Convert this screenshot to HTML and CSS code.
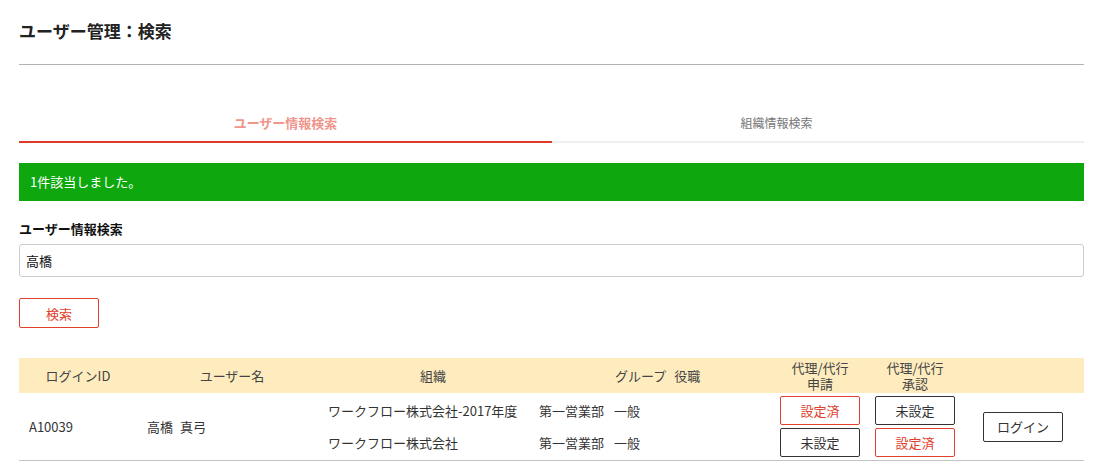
FILE: index.html
```html
<!DOCTYPE html>
<html lang="ja">
<head>
  <meta charset="utf-8">
  <meta name="viewport" content="width=device-width,initial-scale=1">

  <title>ユーザー管理：検索</title>

  <link rel="stylesheet" href="styles.css">
</head>
<body>
  <div class="page">
    <h1 class="page-title">ユーザー管理：検索</h1>

    <div class="tabs">
      <a class="tab active">ユーザー情報検索</a>
      <a class="tab">組織情報検索</a>
    </div>

    <div class="notice">1件該当しました。</div>

    <form class="search" autocomplete="off">
      <label>
        <span class="search-label">ユーザー情報検索</span>
        <input class="search-input" name="keyword" type="text" value="高橋">
      </label>
      <button class="btn btn-red search-btn" type="button">検索</button>
    </form>

    <div class="result">
      <div class="result-head">
        <div class="cell">ログインID</div>
        <div class="cell">ユーザー名</div>
        <div class="cell">組織</div>
        <div class="cell cell-group"><span>グループ</span><span>役職</span></div>
        <div class="cell two-lines"><div>代理/代行</div><div>申請</div></div>
        <div class="cell two-lines"><div>代理/代行</div><div>承認</div></div>
        <div class="cell"></div>
      </div>

      <div class="result-row">
        <div class="cell cell-text">A10039</div>
        <div class="cell cell-text cell-name">高橋 真弓</div>
        <div class="cell cell-stack cell-org">
          <div class="line">ワークフロー株式会社-2017年度</div>
          <div class="line">ワークフロー株式会社</div>
        </div>
        <div class="cell cell-stack">
          <div class="line"><span>第一営業部</span><span>一般</span></div>
          <div class="line"><span>第一営業部</span><span>一般</span></div>
        </div>
        <div class="cell cell-stack cell-buttons">
          <button class="btn btn-red" type="button">設定済</button>
          <button class="btn" type="button">未設定</button>
        </div>
        <div class="cell cell-stack cell-buttons">
          <button class="btn" type="button">未設定</button>
          <button class="btn btn-red" type="button">設定済</button>
        </div>
        <div class="cell cell-login">
          <button class="btn" type="button">ログイン</button>
        </div>
      </div>
    </div>
  </div>
</body>
</html>
```

FILE: styles.css
```css
*, :after, :before {
  box-sizing: border-box;
}

html, body {
  margin: 0;
  padding: 0;
}

body {
  background-color: #fff;
  color: #333;
  font-family: "Noto Sans CJK JP", "Noto Sans", sans-serif;
  font-size: 13px;
  line-height: 18px;
}

.page {
  width: 1065px;
  margin-left: 19px;
  padding-top: 19px;
}

.page-title {
  margin: 0;
  padding-bottom: 21px;
  border-bottom: 1px solid #b3b3b3;
  font-size: 17px;
  font-weight: bold;
  line-height: 24px;
  color: #222;
}

/* tabs */

.tabs {
  display: flex;
  margin-top: 49px;
  border-bottom: 2px solid #efefef;
}

.tab {
  display: block;
  flex: 0 0 449px;
  padding-bottom: 9px;
  margin-bottom: -2px;
  border-bottom: 2px solid transparent;
  text-align: center;
  font-size: 12px;
  color: #777;
}

.tab.active {
  flex-basis: 533px;
  border-bottom-color: #dd3b25;
  font-size: 13px;
  font-weight: bold;
  color: #ef958b;
}

/* notice */

.notice {
  margin-top: 20px;
  height: 38px;
  padding: 10px 11px;
  background-color: #0ea70e;
  color: #fff;
}

/* search form */

.search {
  margin-top: 19px;
}

.search label {
  display: block;
}

.search-label {
  display: block;
  font-weight: bold;
  color: #111;
  margin-bottom: 6px;
}

.search-input {
  display: block;
  width: 100%;
  height: 33px;
  padding: 0 6px;
  border: 1px solid #ccc;
  border-radius: 3px;
  font-family: inherit;
  font-size: 13px;
  color: #111;
}

.btn {
  display: block;
  width: 80px;
  height: 29px;
  padding: 0;
  border: 1px solid #333;
  border-radius: 2px;
  background-color: #fff;
  font-family: inherit;
  font-size: 13px;
  color: #333;
}

.btn-red {
  border-color: #e0402c;
  color: #e0402c;
}

.search-btn {
  height: 30px;
  margin-top: 21px;
}

/* result table */

.result {
  margin-top: 30px;
  border-bottom: 1px solid #c4c4c4;
}

.result-head, .result-row {
  display: grid;
  grid-template-columns: 118px 190px 212px 231px 100px 90px 124px;
}

.result-head {
  height: 35px;
  background-color: #feecbf;
  align-items: center;
  text-align: center;
  color: #444;
}

.result-head .two-lines {
  display: flex;
  flex-direction: column;
  gap: 1px;
  line-height: 15px;
}

.result-head .cell-group {
  text-align: left;
  padding-left: 76px;
}

.result-head .cell-group span + span {
  margin-left: 8px;
}

.result-row {
  height: 67px;
  padding: 3px 0;
}

.cell-text {
  align-self: center;
  padding-left: 10px;
}

.cell-name {
  word-spacing: 4px;
}

.cell-stack {
  display: flex;
  flex-direction: column;
  gap: 3px;
}

.cell-stack .line {
  display: flex;
  align-items: center;
  height: 29px;
}

.cell-stack .line span + span {
  margin-left: 10px;
}

.cell-org {
  padding-left: 1px;
}

.cell-buttons {
  align-items: center;
}

.cell-login {
  display: flex;
  align-items: center;
  justify-content: flex-end;
  padding-right: 21px;
}

.cell-login .btn {
  height: 30px;
}
```
